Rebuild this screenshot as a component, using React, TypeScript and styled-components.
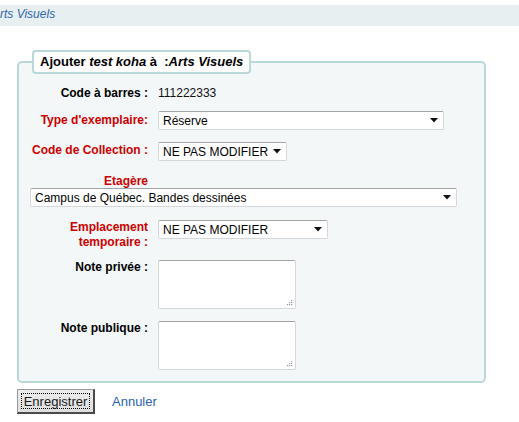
import styled, { createGlobalStyle } from "styled-components"

const GlobalStyle = createGlobalStyle`
  body {
    margin: 0;
    background: #fff;
    font-family: "Liberation Sans", Arial, sans-serif;
    color: #000;
  }
`

type RowProps = {
  top?: number
}

type LabelProps = {
  required?: boolean,
  pad?: number
}

type SelectProps = {
  width: number,
  indent?: number
}

const Breadcrumbs = styled.div`
  margin-top: 5px;
  height: 21px;
  line-height: 19px;
  background: #e8eff1;
  overflow: hidden;
  white-space: nowrap;
  font-size: 12px;
  font-style: italic;
  color: #2f66ae;
`

const Crumb = styled.span`
  display: inline-block;
  margin-left: -8px;
`

const Form = styled.form`
  padding: 24px 0 0 17px;
`

const Fieldset = styled.fieldset`
  box-sizing: border-box;
  width: 469px;
  margin: 0;
  padding: 10px 0 11px 0;
  border: 2px solid #b9d8da;
  border-radius: 5px;
  background: #f3f7f8;
`

const Legend = styled.legend`
  margin-left: 13px;
  padding: 2px 6px 2px 6px;
  border: 2px solid #b9d8da;
  border-radius: 4px;
  background: #fff;
  font-size: 13px;
  line-height: 16px;
  font-weight: bold;
`

const Row = styled.div<RowProps>`
  display: grid;
  grid-template-columns: 129px 1fr;
  column-gap: 10px;
  align-items: start;
  margin-top: ${({top}) => top || 0}px;
`

const Label = styled.label<LabelProps>`
  display: block;
  text-align: right;
  font-size: 12px;
  font-weight: bold;
  line-height: 15px;
  padding-top: ${({pad}) => pad || 0}px;
  color: ${({required}) => required ? "#cc0000" : "#000"};
`

const Value = styled.span`
  font-size: 12px;
  line-height: 18px;
  color: #111;
`

const StackRow = styled.div<RowProps>`
  margin-top: ${({top}) => top || 0}px;
`

const StackLabel = styled(Label)`
  width: 129px;
  line-height: 13px;
`

const SelectBox = styled.div<SelectProps>`
  box-sizing: border-box;
  display: flex;
  align-items: center;
  justify-content: space-between;
  width: ${({width}) => width}px;
  height: 19px;
  margin-left: ${({indent}) => indent || 0}px;
  padding: 0 5px 0 4px;
  background: #fff;
  border: 1px solid #d4d8dc;
  border-top-color: #a4a4a4;
  border-radius: 2px;
  font-size: 12px;
  color: #000;
  white-space: nowrap;
`

const NoteWrap = styled.div`
  position: relative;
  width: 138px;
  height: 49px;
`

const Note = styled.textarea`
  box-sizing: border-box;
  display: block;
  width: 138px;
  height: 49px;
  margin: 0;
  resize: none;
  background: #fff;
  border: 1px solid #d4d8dc;
  border-top-color: #a4a4a4;
  border-radius: 2px;
  outline: none;
`

const Grip = styled.svg`
  position: absolute;
  right: 3px;
  bottom: 3px;
`

const Actions = styled.div`
  display: flex;
  align-items: center;
  gap: 17px;
  margin-top: 6px;
`

const Button = styled.button`
  box-sizing: border-box;
  width: 78px;
  height: 25px;
  padding: 3px;
  background: linear-gradient(#ececec, #dedede);
  border: 1px solid #9a9a9a;
  border-right: 2px solid #4a4a4a;
  border-bottom: 2px solid #4a4a4a;
  font-family: "Liberation Sans", Arial, sans-serif;
  font-size: 13px;
  color: #1a1a1a;
`

const Focus = styled.span`
  display: block;
  height: 100%;
  box-sizing: border-box;
  border: 1px dotted #000;
  line-height: 15px;
`

const Cancel = styled.a`
  font-size: 13px;
  color: #2a5fb0;
  text-decoration: none;
`

const Arrow = () => (
  <svg width="8" height="5" viewBox="0 0 8 5">
    <polygon points="0,0 8,0 4,4.5" fill="#111" />
  </svg>
)

const Select = ({text, width, indent}: {text: string, width: number, indent?: number}) => (
  <SelectBox width={width} indent={indent}>
    <span>{text}</span>
    <Arrow />
  </SelectBox>
)

const Textarea = () => (
  <NoteWrap>
    <Note />
    <Grip width="7" height="7" viewBox="0 0 7 7">
      {[[5,0],[3,2],[5,2],[1,4],[3,4],[5,4]].map(([x,y]) => (
        <rect key={`${x}-${y}`} x={x} y={y+1} width="1.2" height="1.2" fill="#9a9a9a" />
      ))}
    </Grip>
  </NoteWrap>
)

const App = () => {
  return (
    <>
      <GlobalStyle />
      <Breadcrumbs><Crumb>Arts Visuels</Crumb></Breadcrumbs>
      <Form onSubmit={e => e.preventDefault()}>
        <Fieldset>
          <Legend>Ajouter <i>test koha</i> à &nbsp;:<i>Arts Visuels</i></Legend>
          <Row>
            <Label as="span" style={{lineHeight: "18px"}}>Code à barres :</Label>
            <Value>111222333</Value>
          </Row>
          <Row top={9}>
            <Label required pad={2}>Type d'exemplaire:</Label>
            <Select text="Réserve" width={286} />
          </Row>
          <Row top={12}>
            <Label required pad={1}>Code de Collection :</Label>
            <Select text="NE PAS MODIFIER" width={129} />
          </Row>
          <StackRow top={14}>
            <StackLabel required>Etagère</StackLabel>
            <Select text="Campus de Québec. Bandes dessinées" width={427} indent={11} />
          </StackRow>
          <Row top={13}>
            <Label required>Emplacement temporaire :</Label>
            <Select text="NE PAS MODIFIER" width={170} />
          </Row>
          <Row top={10}>
            <Label pad={0}>Note privée :</Label>
            <Textarea />
          </Row>
          <Row top={12}>
            <Label pad={0}>Note publique :</Label>
            <Textarea />
          </Row>
        </Fieldset>
        <Actions>
          <Button type="submit"><Focus>Enregistrer</Focus></Button>
          <Cancel href="#">Annuler</Cancel>
        </Actions>
      </Form>
    </>
  )
}

export default App
